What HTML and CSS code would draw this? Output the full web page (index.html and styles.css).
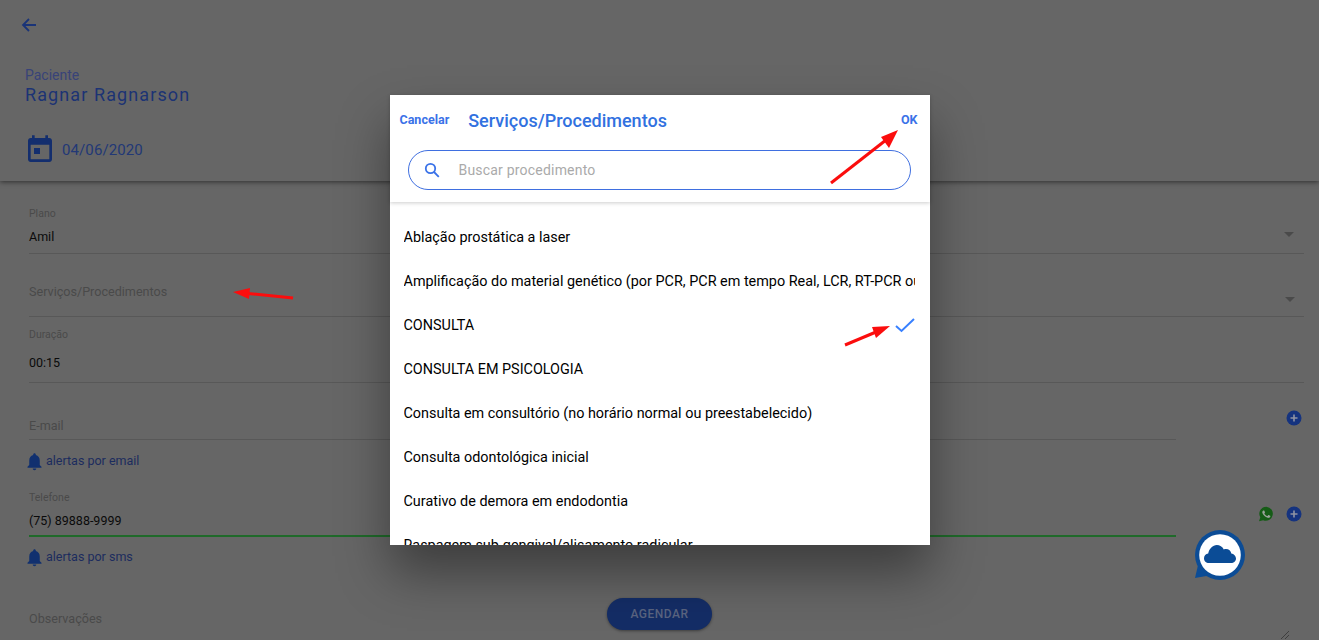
FILE: index.html
```html
<!DOCTYPE html>
<html lang="pt-BR">
<head>
    <meta charset="UTF-8">
    <meta name="viewport" content="width=device-width, initial-scale=1.0">
    <title>Agendar</title>
    <link rel="stylesheet" href="styles.css">
</head>
<body>
    <div class="page">
        <header class="top">
            <svg class="back" viewBox="0 0 16 16"><path d="M8 2 2 8l6 6M2 8h13"/></svg>
            <div class="patient-label">Paciente</div>
            <div class="patient-name">Ragnar Ragnarson</div>
            <div class="date-row">
                <svg class="cal" viewBox="0 0 24 24"><path fill-rule="evenodd" d="M16 1v2H8V1H6v2H5C3.89 3 3 3.9 3 5v14c0 1.1.89 2 2 2h14c1.1 0 2-.9 2-2V5c0-1.1-.9-2-2-2h-1V1h-2zM5 8h14v11H5V8z"/><path d="M7.5 10.5H12V15H7.5z"/></svg>
                <span class="date">04/06/2020</span>
            </div>
        </header>

        <main class="form">
            <div class="field plano">
                <div class="small-label">Plano</div>
                <div class="select-line">
                    <span class="value">Amil</span>
                    <span class="caret"></span>
                </div>
            </div>
            <div class="field servicos">
                <div class="select-line">
                    <span class="placeholder">Serviços/Procedimentos</span>
                    <span class="caret caret-low"></span>
                </div>
            </div>
            <div class="field duracao">
                <div class="small-label">Duração</div>
                <div class="value">00:15</div>
            </div>

            <div class="contact-row email-row">
                <div class="field email">
                    <div class="placeholder">E-mail</div>
                </div>
                <div class="contact-icons">
                    <svg class="plus" viewBox="0 0 16 16"><circle cx="8" cy="8" r="7.5"/><path d="M8 4.5v7M4.5 8h7"/></svg>
                </div>
            </div>
            <div class="alert-row first-alert">
                <svg class="bell" viewBox="0 0 24 24"><path d="M12 22c1.1 0 2-.9 2-2h-4c0 1.1.89 2 2 2zm6-6v-5c0-3.07-1.64-5.64-4.5-6.32V4c0-.83-.67-1.5-1.5-1.5s-1.5.67-1.5 1.5v.68C7.63 5.36 6 7.92 6 11v5l-2 2v1h16v-1l-2-2z"/></svg>
                <span>alertas por email</span>
            </div>

            <div class="contact-row phone-row">
                <div class="field phone">
                    <div class="small-label">Telefone</div>
                    <div class="value">(75) 89888-9999</div>
                </div>
                <div class="contact-icons">
                    <svg class="whats" viewBox="0 0 24 24"><path class="whats-bg" d="M12.6 1a10.6 10.6 0 0 0-9.1 16L1.5 23l6.2-1.6A10.6 10.6 0 1 0 12.6 1z"/><path class="whats-phone" d="M17.9 14.6c-.3-.15-1.76-.87-2.03-.97-.27-.1-.47-.15-.67.15-.2.3-.77.97-.94 1.16-.17.2-.35.22-.64.08-.3-.15-1.26-.46-2.39-1.48-.88-.79-1.48-1.76-1.65-2.06-.17-.3-.02-.46.13-.6.13-.14.3-.35.44-.52.15-.18.2-.3.3-.5.1-.2.05-.37-.02-.52-.08-.15-.67-1.61-.92-2.2-.24-.58-.49-.5-.67-.52h-.57c-.2 0-.52.08-.79.38-.27.3-1.04 1.01-1.04 2.48 0 1.46 1.06 2.87 1.21 3.07.15.2 2.1 3.2 5.08 4.49.7.3 1.26.49 1.69.62.71.23 1.36.2 1.87.12.57-.09 1.76-.72 2-1.41.25-.7.25-1.29.18-1.42-.08-.12-.27-.2-.57-.35z"/></svg>
                    <svg class="plus" viewBox="0 0 16 16"><circle cx="8" cy="8" r="7.5"/><path d="M8 4.5v7M4.5 8h7"/></svg>
                </div>
            </div>
            <div class="alert-row">
                <svg class="bell" viewBox="0 0 24 24"><path d="M12 22c1.1 0 2-.9 2-2h-4c0 1.1.89 2 2 2zm6-6v-5c0-3.07-1.64-5.64-4.5-6.32V4c0-.83-.67-1.5-1.5-1.5s-1.5.67-1.5 1.5v.68C7.63 5.36 6 7.92 6 11v5l-2 2v1h16v-1l-2-2z"/></svg>
                <span>alertas por sms</span>
            </div>

            <div class="placeholder obs">Observações</div>
        </main>

        <svg class="resize" viewBox="0 0 10 10"><path d="M1 9 9 1M5 9l4-4"/></svg>
        <button class="agendar">AGENDAR</button>
        <svg class="chat-cloud" viewBox="0 0 60 60">
            <path class="cloud-tail" d="M9 36 5 53l17-3z"/>
            <circle class="cloud-ring" cx="30" cy="30" r="25"/>
            <circle class="cloud-inner" cx="30" cy="30" r="20.800"/>
            <path class="cloud-ring" d="M19 38c-3 0-5-2-5-4.800 0-2.500 1.800-4.400 4.200-4.800C19.200 23.600 22.800 20 26.800 20c3 0 5.600 1.700 7 4.400.7-.3 1.400-.4 2.200-.4 2.800 0 5 2 5.300 4.600C43.800 29 46 31 46 33.500 46 36 44 38 41 38z"/>
        </svg>

        <div class="backdrop">
            <section class="modal">
                <div class="modal-head">
                    <div class="modal-bar">
                        <span class="bar-btn">Cancelar</span>
                        <h2 class="modal-title">Serviços/Procedimentos</h2>
                        <span class="bar-btn">OK</span>
                    </div>
                    <div class="search">
                        <svg class="search-icon" viewBox="0 0 16 16"><circle cx="6.500" cy="6.500" r="4.700"/><path d="m10 10 4.800 4.800"/></svg>
                        <span class="search-text">Buscar procedimento</span>
                    </div>
                </div>
                <ul class="list">
                    <li>Ablação prostática a laser</li>
                    <li>Amplificação do material genético (por PCR, PCR em tempo Real, LCR, RT-PCR ou outras técnicas)</li>
                    <li class="checked">CONSULTA
                        <svg class="check" viewBox="0 0 20 16"><path d="m1 9 5.500 5L19 2"/></svg>
                    </li>
                    <li>CONSULTA EM PSICOLOGIA</li>
                    <li>Consulta em consultório (no horário normal ou preestabelecido)</li>
                    <li>Consulta odontológica inicial</li>
                    <li>Curativo de demora em endodontia</li>
                    <li>Raspagem sub-gengival/alisamento radicular</li>
                </ul>
            </section>
        </div>

        <!-- setas vermelhas da anotacao -->
        <svg class="arrows" viewBox="0 0 1319 640">
            <path d="M293 298 248 293.500"/>
            <polygon points="233,292 250,288 249,299"/>
            <path d="M831 183 886 140"/>
            <polygon points="898,130 881,137 889,148"/>
            <path d="M845 345 876 332"/>
            <polygon points="890,326 872,327 876,338"/>
        </svg>
    </div>
</body>
</html>
```

FILE: styles.css
```css
* {
    box-sizing: border-box;
}
html, body {
    margin: 0;
    height: 100%;
    overflow: hidden;
}
body {
    font-family: 'Roboto', 'Liberation Sans', sans-serif;
    background-color: #666666;
    color: #000;
}
.page {
    position: relative;
    height: 640px;
    overflow: hidden;
}

/* topo */
.top {
    height: 181px;
    padding: 17px 0 0 21px;
    box-shadow: 0 1px 5px rgba(0,0,0,0.55);
}
.back {
    display: block;
    width: 16px;
    height: 16px;
    margin-bottom: 34px;
    fill: none;
    stroke: #1a3478;
    stroke-width: 1.8;
}
.patient-label {
    margin-left: 4px;
    font-size: 14px;
    line-height: 17px;
    color: #384378;
}
.patient-name {
    margin: -1px 0 0 4px;
    font-size: 18px;
    line-height: 24px;
    letter-spacing: 1.1px;
    color: #1c3374;
}
.date-row {
    display: flex;
    align-items: center;
    margin: 27px 0 0 3px;
}
.cal {
    width: 32px;
    height: 32px;
    fill: #132e6e;
}
.date {
    margin-left: 6px;
    font-size: 15px;
    letter-spacing: 0.1px;
    color: #223876;
}

/* formulario */
.form {
    padding: 0 15px 0 29px;
}
.field {
    border-bottom: 1px solid #585858;
}
.small-label {
    font-size: 10.500px;
    line-height: 14px;
    color: #4a4a4a;
}
.value {
    font-size: 12.500px;
    line-height: 20px;
    color: #0a0a0a;
}
.placeholder {
    font-size: 12.600px;
    line-height: 20px;
    color: #4a4a4a;
}
.select-line {
    display: flex;
    justify-content: space-between;
    align-items: center;
}
.caret {
    width: 0;
    height: 0;
    margin-right: 10px;
    border-left: 5px solid transparent;
    border-right: 5px solid transparent;
    border-top: 5px solid #4a4a4a;
}
.caret-low {
    margin-top: 14px;
    margin-right: 9px;
}
.plano {
    margin-top: 26px;
    padding-bottom: 6px;
}
.plano .value {
    margin-top: 6px;
}
.servicos {
    margin-top: 28px;
    padding-bottom: 14px;
}
.duracao {
    margin-top: 11px;
    padding-bottom: 9px;
}
.duracao .value {
    margin-top: 11px;
}
.contact-row {
    display: flex;
    justify-content: space-between;
}
.contact-icons {
    display: flex;
    gap: 12px;
    margin-right: 2px;
}
.email-row {
    margin-top: 23px;
}
.email {
    width: 1147px;
    padding: 10px 0 3px;
}
.email-row .contact-icons {
    margin-top: 4px;
}
.phone-row {
    margin-top: 20px;
}
.phone {
    width: 1147px;
    padding-bottom: 4px;
    border-bottom: 2px solid #1f6a2a;
}
.phone .value {
    margin-top: 6px;
}
.phone-row .contact-icons {
    margin-top: 15px;
}
.plus {
    width: 16px;
    height: 16px;
}
.plus circle {
    fill: #15337f;
}
.plus path {
    fill: none;
    stroke: #8f93a3;
    stroke-width: 1.6;
}
.whats {
    width: 16px;
    height: 16px;
}
.whats-bg {
    fill: #155c16;
}
.whats-phone {
    fill: #9aa39a;
}
.alert-row {
    display: flex;
    align-items: center;
    gap: 1.500px;
    height: 20px;
    margin: 10px 0 0 -5.500px;
    font-size: 12.500px;
    line-height: 20px;
    color: #1c2c5e;
}
.first-alert {
    margin-top: 11px;
}
.bell {
    width: 21px;
    height: 21px;
    fill: #11306f;
}
.obs {
    margin-top: 42px;
}

/* flutuantes */
.resize {
    position: absolute;
    left: 1280px;
    top: 630px;
    width: 10px;
    height: 10px;
    fill: none;
    stroke: #333;
    stroke-width: 0.8;
}
.agendar {
    position: absolute;
    left: 607px;
    top: 598px;
    width: 105px;
    height: 32px;
    border: none;
    border-radius: 16px;
    background-color: #142d66;
    color: #5a6480;
    font-family: inherit;
    font-size: 12px;
    font-weight: 500;
    letter-spacing: 0.5px;
    box-shadow: 0 1px 3px rgba(0,0,0,0.4);
}
.backdrop {
    position: absolute;
    inset: 0;
    display: flex;
    align-items: center;
    justify-content: center;
}
.chat-cloud {
    position: absolute;
    left: 1190px;
    top: 525px;
    width: 60px;
    height: 60px;
}
.cloud-ring, .cloud-tail {
    fill: #0b4c96;
}
.cloud-inner {
    fill: #fff;
}

/* modal */
.modal {
    display: flex;
    flex-direction: column;
    width: 540px;
    height: 450px;
    background-color: #fff;
    box-shadow: 0 28px 48px rgba(0,0,0,0.4);
}
.modal-head {
    height: 107px;
    box-shadow: 0 1px 4px rgba(0,0,0,0.2);
    position: relative;
}
.modal-bar {
    display: flex;
    align-items: center;
    height: 50px;
    padding: 0 12px 0 10px;
}
.bar-btn {
    font-size: 12.500px;
    font-weight: 700;
    color: #3a72e8;
    margin-top: -1px;
}
.modal-title {
    flex: 1;
    margin: 0 0 0 19px;
    font-size: 18px;
    font-weight: 500;
    color: #3171e0;
}
.search {
    display: flex;
    align-items: center;
    height: 40px;
    margin: 5px 19px 0 18px;
    padding-left: 15px;
    border: 1px solid #3f6fe0;
    border-radius: 20px;
}
.search-icon {
    width: 16px;
    height: 16px;
    fill: none;
    stroke: #3a72e8;
    stroke-width: 1.8;
}
.search-text {
    margin-left: 19px;
    font-size: 14px;
    letter-spacing: 0.2px;
    color: #aaaaaa;
}
.list {
    flex: 1;
    margin: 0;
    padding: 13px 15px 0 14px;
    list-style: none;
    overflow: hidden;
}
.list li {
    display: flex;
    align-items: center;
    justify-content: space-between;
    height: 44px;
    font-size: 14.400px;
    white-space: nowrap;
    overflow: hidden;
}
.check {
    width: 20px;
    height: 16px;
    fill: none;
    stroke: #3880ff;
    stroke-width: 2;
}

/* setas */
.arrows {
    position: absolute;
    inset: 0;
    width: 1319px;
    height: 640px;
    pointer-events: none;
    stroke: #fb0d0d;
    fill: #fb0d0d;
}
.arrows path {
    fill: none;
    stroke-width: 3;
}
.arrows polygon {
    stroke: none;
}
```
